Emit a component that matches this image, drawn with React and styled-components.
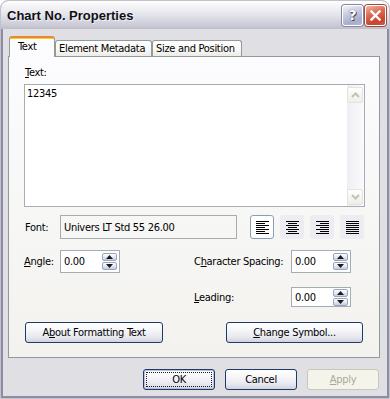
import React from 'react';
import styled, { createGlobalStyle } from 'styled-components';

const Global = createGlobalStyle`
  html, body { margin: 0; padding: 0; background: #ffffff; }
  body {
    font-family: "DejaVu Sans Condensed", "Liberation Sans", Arial, sans-serif;
    font-size: 11px;
    letter-spacing: -0.3px;
    color: #000;
  }
  * { box-sizing: border-box; }
`;

const Window = styled.div`
  width: 390px;
  height: 399px;
  display: flex;
  flex-direction: column;
  background: #e0dfe3;
  border: 1px solid #c2c1cc;
  border-radius: 8px 8px 0 0;
  box-shadow: inset 0 0 0 2px #8d8ca3;
  overflow: hidden;
`;

const TitleBar = styled.div`
  flex: none;
  height: 28px;
  display: flex;
  align-items: center;
  padding: 0 3px 0 6px;
  border-radius: 7px 7px 0 0;
  background: linear-gradient(#ffffff 0%, #f3f3f6 22%, #e0e0e8 55%, #cacad6 88%, #bdbdcb 100%);
`;

const Title = styled.div`
  flex: 1;
  font-family: "Liberation Sans", Arial, sans-serif;
  font-size: 13px;
  font-weight: bold;
  letter-spacing: 0;
  color: #101018;
  text-shadow: 1px 1px 0 rgba(255, 255, 255, 0.6);
`;

const CaptionButtons = styled.div`
  display: flex;
  gap: 2px;
`;

const CaptionButton = styled.div`
  width: 21px;
  height: 21px;
  border-radius: 3px;
  border: 1px solid #ffffff;
  box-shadow: 0 0 0 1px ${p => (p.$close ? '#a04a3c' : '#8486a4')};
  display: flex;
  align-items: center;
  justify-content: center;
  background: ${p =>
    p.$close
      ? 'linear-gradient(160deg, #f0b5a6 0%, #dc6a52 40%, #c8452f 75%, #c65a46 100%)'
      : 'linear-gradient(160deg, #f2f2f8 0%, #c9cbdc 40%, #a9accb 75%, #b4b6d0 100%)'};
`;

const HelpGlyph = styled.span`
  font-family: "DejaVu Sans", sans-serif;
  font-weight: bold;
  font-size: 14px;
  letter-spacing: 0;
  color: #ffffff;
  line-height: 1;
  text-shadow: 0 0 1px #2f3150, 1px 1px 0 #4a4c6a;
`;

const Body = styled.div`
  flex: 1;
  display: flex;
  flex-direction: column;
  padding: 7px 9px 0 7px;
`;

const TabRow = styled.div`
  height: 20px;
  display: flex;
  align-items: flex-end;
  padding-left: 1px;
  position: relative;
  z-index: 1;
`;

const Tab = styled.div`
  width: ${p => p.$w}px;
  height: ${p => (p.$active ? 21 : 16)}px;
  margin-bottom: ${p => (p.$active ? -1 : 0)}px;
  display: flex;
  align-items: center;
  padding: ${p => (p.$active ? '0 0 2px 8px' : '0 0 0 3px')};
  border: 1px solid #919b9c;
  border-bottom: none;
  border-top: ${p => (p.$active ? '2px solid #e68b2c' : '1px solid #919b9c')};
  border-radius: 3px 3px 0 0;
  background: ${p =>
    p.$active ? '#fcfcfe' : 'linear-gradient(#ffffff 0%, #f7f7f4 60%, #ecebe6 100%)'};
  box-shadow: ${p => (p.$active ? 'inset 0 1px 0 #ffc73c' : 'none')};
  white-space: nowrap;
  overflow: hidden;
`;

const Panel = styled.div`
  height: 302px;
  border: 1px solid #919b9c;
  background: linear-gradient(#fcfcfe 0%, #f7f7f6 50%, #f3f2ee 100%);
  padding: 9px 14px 0 15px;
  display: flex;
  flex-direction: column;
`;

const Label = styled.div`
  line-height: 13px;
  padding-left: 1px;
  white-space: nowrap;
`;

const TextBox = styled.div`
  margin-top: 5px;
  height: 123px;
  border: 1px solid #a5acb2;
  background: #ffffff;
  display: flex;
`;

const TextContent = styled.div`
  flex: 1;
  padding: 2px 2px;
  line-height: 13px;
`;

const Scrollbar = styled.div`
  width: 17px;
  display: flex;
  flex-direction: column;
  justify-content: space-between;
  padding: 2px 1px 1px 0;
  background: linear-gradient(to right, #eeeef4, #fbfbfd);
`;

const ScrollButton = styled.div`
  height: 16px;
  border: 1px solid #e4e3dc;
  border-radius: 2px;
  background: linear-gradient(#fefefc, #efeee8);
  display: flex;
  align-items: center;
  justify-content: center;
`;

const FontRow = styled.div`
  margin-top: 8px;
  height: 24px;
  display: flex;
  align-items: center;
`;

const FieldLabel = styled.div`
  width: ${p => p.$w || 36}px;
  padding-left: 1px;
  white-space: nowrap;
`;

const ReadOnlyBox = styled.div`
  width: 177px;
  height: 24px;
  border: 1px solid #a5acb2;
  padding-left: 3px;
  display: flex;
  align-items: center;
  white-space: nowrap;
`;

const AlignGroup = styled.div`
  margin-left: 13px;
  display: flex;
  gap: 6px;
`;

const AlignButton = styled.div`
  width: 24px;
  height: 24px;
  border-radius: 3px;
  border: 1px solid ${p => (p.$active ? '#8b9db3' : 'transparent')};
  background: ${p => (p.$active ? '#ffffff' : '#ececf2')};
  display: flex;
  align-items: center;
  justify-content: center;
`;

const FieldsGrid = styled.div`
  margin-top: 11px;
  display: grid;
  grid-template-columns: 36px 60px 73px 98px 60px;
  grid-template-rows: 23px 20px;
  row-gap: 14px;
  align-items: center;
`;

const GridCell = styled.div`
  grid-column: ${p => p.$col};
  grid-row: ${p => p.$row};
  white-space: nowrap;
  padding-left: ${p => (p.$label ? 1 : 0)}px;
`;

const SpinBox = styled.div`
  height: ${p => p.$h}px;
  border: 1px solid #a5acb2;
  background: #ffffff;
  display: flex;
  align-items: center;
  padding: 0 2px 0 3px;
`;

const SpinValue = styled.div`
  flex: 1;
`;

const Spinner = styled.div`
  width: 15px;
  display: flex;
  flex-direction: column;
  gap: 1px;
`;

const SpinButton = styled.div`
  height: 8px;
  border: 1px solid #98a6bf;
  border-radius: 2px;
  background: linear-gradient(#ffffff 0%, #e6e9f2 50%, #c6ccdc 100%);
  display: flex;
  align-items: center;
  justify-content: center;
`;

const ButtonRow = styled.div`
  margin-top: 15px;
  display: flex;
  justify-content: space-between;
  padding: 0 2px 0 1px;
`;

const PushButton = styled.button`
  position: relative;
  width: ${p => p.$w}px;
  height: 21px;
  padding: 0;
  font: inherit;
  letter-spacing: inherit;
  display: flex;
  align-items: center;
  justify-content: center;
  border-radius: 3px;
  border: 1px solid ${p => (p.disabled ? '#c9c7ba' : '#1d3a68')};
  color: ${p => (p.disabled ? '#aca899' : '#000000')};
  background: ${p =>
    p.disabled
      ? '#f5f4ea'
      : 'linear-gradient(#ffffff 0%, #f7f7fa 35%, #e7e7ef 75%, #d2d2df 100%)'};
  box-shadow: ${p => (p.$default ? 'inset 0 0 0 1px #b9c1dc' : 'none')};
  &::after {
    content: '';
    display: ${p => (p.$default ? 'block' : 'none')};
    position: absolute;
    inset: 2px;
    border: 1px dotted #202020;
  }
`;

const Footer = styled.div`
  margin-top: 11px;
  display: flex;
  justify-content: flex-end;
  gap: 10px;
  padding-right: 1px;
`;

const Key = styled.span`
  text-decoration: underline;
  text-underline-offset: 1px;
`;

const Chevron = ({ up }) => (
  <svg width="9" height="6" viewBox="0 0 9 6">
    <polyline
      points={up ? '1,5 4.5,1.5 8,5' : '1,1 4.5,4.5 8,1'}
      fill="none"
      stroke="#c3c2b8"
      strokeWidth="2"
    />
  </svg>
);

const Tri = ({ up }) => (
  <svg width="7" height="4" viewBox="0 0 7 4">
    <polygon points={up ? '0,4 3.5,0 7,4' : '0,0 3.5,4 7,0'} fill="#1a1a1a" />
  </svg>
);

const AlignIcon = ({ mode }) => {
  const lines = [0, 1, 2, 3, 4, 5, 6].map(i => {
    const full = mode === 'justify' || i % 2 === 0;
    const w = full ? 13 : 9;
    let x = 0;
    if (!full && mode === 'center') x = 2;
    if (!full && mode === 'right') x = 4;
    return <rect key={i} x={x} y={i * 2} width={w} height="1" fill="#000" />;
  });
  return (
    <svg width="13" height="13" viewBox="0 0 13 13">
      {lines}
    </svg>
  );
};

const Spin = ({ value, h }) => (
  <SpinBox $h={h}>
    <SpinValue>{value}</SpinValue>
    <Spinner>
      <SpinButton>
        <Tri up />
      </SpinButton>
      <SpinButton>
        <Tri />
      </SpinButton>
    </Spinner>
  </SpinBox>
);

export default function App() {
  return (
    <>
      <Global />
      <Window>
        <TitleBar>
          <Title>Chart No. Properties</Title>
          <CaptionButtons>
            <CaptionButton>
              <HelpGlyph>?</HelpGlyph>
            </CaptionButton>
            <CaptionButton $close>
              <svg width="11" height="11" viewBox="0 0 11 11">
                <path d="M1.5 1.5 L9.5 9.5 M9.5 1.5 L1.5 9.5" stroke="#ffffff" strokeWidth="2.4" strokeLinecap="square" />
              </svg>
            </CaptionButton>
          </CaptionButtons>
        </TitleBar>
        <Body>
          <TabRow>
            <Tab $active $w={46}>Text</Tab>
            <Tab $w={97}>Element Metadata</Tab>
            <Tab $w={90}>Size and Position</Tab>
          </TabRow>
          <Panel>
            <Label>
              <Key>T</Key>ext:
            </Label>
            <TextBox>
              <TextContent>12345</TextContent>
              <Scrollbar>
                <ScrollButton>
                  <Chevron up />
                </ScrollButton>
                <ScrollButton>
                  <Chevron />
                </ScrollButton>
              </Scrollbar>
            </TextBox>
            <FontRow>
              <FieldLabel>Font:</FieldLabel>
              <ReadOnlyBox>Univers LT Std 55 26.00</ReadOnlyBox>
              <AlignGroup>
                <AlignButton $active>
                  <AlignIcon mode="left" />
                </AlignButton>
                <AlignButton>
                  <AlignIcon mode="center" />
                </AlignButton>
                <AlignButton>
                  <AlignIcon mode="right" />
                </AlignButton>
                <AlignButton>
                  <AlignIcon mode="justify" />
                </AlignButton>
              </AlignGroup>
            </FontRow>
            <FieldsGrid>
              <GridCell $col={1} $row={1}>
                <Key>A</Key>ngle:
              </GridCell>
              <GridCell $col={2} $row={1}>
                <Spin value="0.00" h={23} />
              </GridCell>
              <GridCell $col={4} $row={1} $label>
                C<Key>h</Key>aracter Spacing:
              </GridCell>
              <GridCell $col={5} $row={1}>
                <Spin value="0.00" h={23} />
              </GridCell>
              <GridCell $col={4} $row={2} $label>
                <Key>L</Key>eading:
              </GridCell>
              <GridCell $col={5} $row={2}>
                <Spin value="0.00" h={20} />
              </GridCell>
            </FieldsGrid>
            <ButtonRow>
              <PushButton $w={138}>
                <span>
                  A<Key>b</Key>out Formatting Text
                </span>
              </PushButton>
              <PushButton $w={137}>
                <span>
                  <Key>C</Key>hange Symbol...
                </span>
              </PushButton>
            </ButtonRow>
          </Panel>
          <Footer>
            <PushButton $w={72} $default>
              OK
            </PushButton>
            <PushButton $w={72}>Cancel</PushButton>
            <PushButton $w={72} disabled>
              <span>
                <Key>A</Key>pply
              </span>
            </PushButton>
          </Footer>
        </Body>
      </Window>
    </>
  );
}
